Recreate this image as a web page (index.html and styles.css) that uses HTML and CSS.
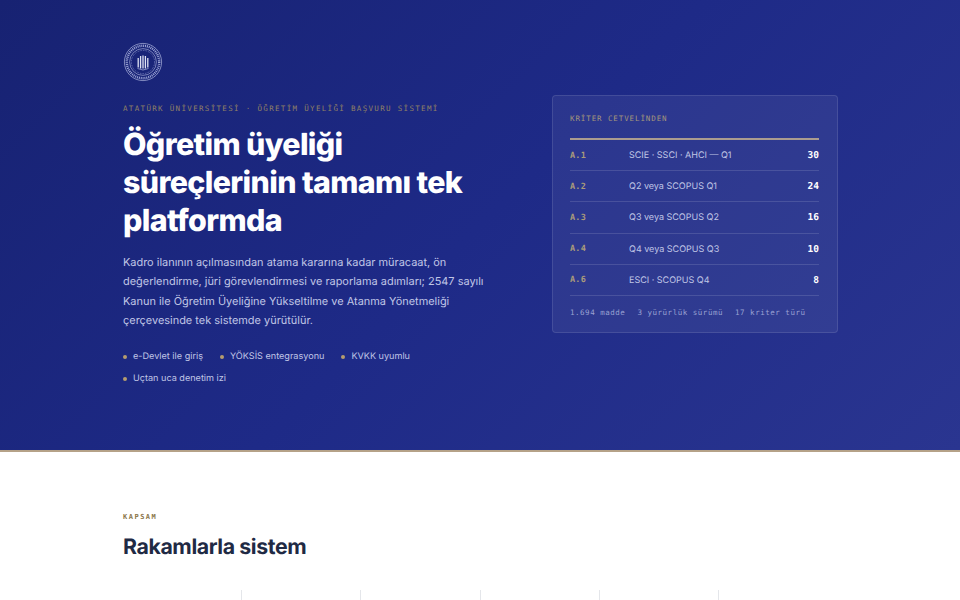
FILE: index.html
```html
<!DOCTYPE html>
<html lang="tr">
<head>
<meta charset="utf-8">
<title>Öğretim Üyeliği Başvuru Sistemi</title>
<link rel="stylesheet" href="styles.css">
</head>
<body>
<header class="hero">
  <div class="wrap">
    <svg class="logo" viewBox="0 0 40 40" width="40" height="40" aria-hidden="true">
      <circle cx="20" cy="20" r="18.6" fill="none" stroke="#aeb5dc" stroke-width=".7"/>
      <circle cx="20" cy="20" r="16.2" fill="none" stroke="#9ea6d6" stroke-width="2.4" stroke-dasharray="1 .9"/>
      <circle cx="20" cy="20" r="13.4" fill="none" stroke="#b4bbe0" stroke-width=".6"/>
      <circle cx="20" cy="20" r="11.6" fill="none" stroke="#7f88c4" stroke-width="1" stroke-dasharray=".7 1"/>
      <path d="M20 13.5v13M17.6 14v12.5M22.4 14v12.5M15.2 16v9.5M24.8 16v9.5" stroke="#dfe2f3" stroke-width="1.3" fill="none"/>
      <path d="M14.5 26.5q5.5 3 11 0" stroke="#9ea6d6" stroke-width=".8" fill="none"/>
    </svg>
    <div class="hero-grid">
      <div class="intro">
        <p class="eyebrow">ATATÜRK ÜNİVERSİTESİ · ÖĞRETİM ÜYELİĞİ BAŞVURU SİSTEMİ</p>
        <h1>Öğretim üyeliği süreçlerinin tamamı tek platformda</h1>
        <p class="lead">Kadro ilanının açılmasından atama kararına kadar müracaat, ön değerlendirme, jüri görevlendirmesi ve raporlama adımları; 2547 sayılı Kanun ile Öğretim Üyeliğine Yükseltilme ve Atanma Yönetmeliği çerçevesinde tek sistemde yürütülür.</p>
        <ul class="tags">
          <li>e-Devlet ile giriş</li>
          <li>YÖKSİS entegrasyonu</li>
          <li>KVKK uyumlu</li>
          <li>Uçtan uca denetim izi</li>
        </ul>
      </div>
      <aside class="card">
        <h2 class="card-title">KRİTER CETVELİNDEN</h2>
        <div class="row"><span class="code">A.1</span><span class="desc">SCIE · SSCI · AHCI — Q1</span><span class="pts">30</span></div>
        <div class="row"><span class="code">A.2</span><span class="desc">Q2 veya SCOPUS Q1</span><span class="pts">24</span></div>
        <div class="row"><span class="code">A.3</span><span class="desc">Q3 veya SCOPUS Q2</span><span class="pts">16</span></div>
        <div class="row"><span class="code">A.4</span><span class="desc">Q4 veya SCOPUS Q3</span><span class="pts">10</span></div>
        <div class="row"><span class="code">A.6</span><span class="desc">ESCI · SCOPUS Q4</span><span class="pts">8</span></div>
        <div class="card-foot"><span>1.694 madde</span><span>3 yürürlük sürümü</span><span>17 kriter türü</span></div>
      </aside>
    </div>
  </div>
</header>
<main class="scope">
  <div class="wrap">
    <p class="kicker">KAPSAM</p>
    <h2 class="scope-title">Rakamlarla sistem</h2>
    <div class="stats">
      <div class="stat"></div><div class="stat"></div><div class="stat"></div><div class="stat"></div><div class="stat"></div><div class="stat"></div>
    </div>
  </div>
</main>
</body>
</html>
```
FILE: styles.css
```css
* { box-sizing: border-box; }
html, body { margin: 0; padding: 0; }
body { height: 600px; overflow: hidden; background: #fff; font-family: Inter, "Liberation Sans", sans-serif; text-rendering: geometricPrecision; }
.wrap { width: 714px; margin: 0 auto; }
.hero { height: 452px; padding-top: 42px; background: linear-gradient(135deg, #172272 0%, #1e2a87 50%, #2a3590 100%); border-bottom: 2px solid #b5a288; }
.logo { display: block; width: 40px; height: 40px; }
.hero-grid { display: grid; grid-template-columns: minmax(0, 1fr) 286px; column-gap: 52px; margin-top: 13px; margin-right: -1px; align-items: start; }
.intro { padding-top: 7px; }
.eyebrow { margin: 0 0 10px; font: 400 7.5px/14px "DejaVu Sans Mono", monospace; letter-spacing: 1.33px; color: #8f8066; white-space: nowrap; }
h1 { margin: 0 0 14px; font-size: 30.4px; line-height: 38px; font-weight: 800; letter-spacing: -0.64px; color: #fff; }
.lead { margin: -1px 0 19px; font-size: 10.95px; line-height: 19.4px; color: #c0c6e6; }
.tags { display: flex; flex-wrap: wrap; gap: 8px 17px; margin: 0; padding: 0; list-style: none; font-size: 9.1px; line-height: 14px; color: #c0c6e6; }
.tags li { display: flex; align-items: center; gap: 6px; height: 14px; }
.tags li::before { content: ""; width: 4px; height: 4px; border-radius: 50%; background: #b59c6e; }
.card { padding: 16px 18px 14px 17px; height: 238px; background: rgba(255,255,255,.06); border: 1px solid rgba(255,255,255,.11); border-radius: 4px; }
.card-title { margin: 0; padding-bottom: 12px; border-bottom: 2px solid #ab9c8f; font: 400 7.5px/14px "DejaVu Sans Mono", monospace; letter-spacing: .9px; color: #a3967c; }
.row { display: grid; grid-template-columns: 59px 1fr auto; align-items: center; height: 31.2px; padding-top: 1px; border-bottom: 1px solid rgba(255,255,255,.13); font-size: 9px; color: #c0c6e6; }
.code { font: 700 8.5px "DejaVu Sans Mono", monospace; letter-spacing: .2px; color: #a99b7b; }
.pts { font: 700 9.5px "DejaVu Sans Mono", monospace; color: #fff; }
.card-foot { display: flex; gap: 12px; margin-top: 10px; font: 400 7.5px/14px "DejaVu Sans Mono", monospace; letter-spacing: .52px; color: #9aa2d2; white-space: nowrap; }
.scope { padding-top: 58px; }
.kicker { margin: 0 0 8px; font: 700 7px/14px "DejaVu Sans Mono", monospace; letter-spacing: 1.5px; color: #8a7448; }
.scope-title { margin: 0; font-size: 21.3px; line-height: 30px; font-weight: 700; letter-spacing: -0.4px; color: #1f2a44; }
.stats { display: grid; grid-template-columns: repeat(6, 119.2px); margin-top: 28px; height: 10px; }
.stat { border-right: 1px solid #e4e6ea; }
.stat:last-child { border-right: 0; }
```
